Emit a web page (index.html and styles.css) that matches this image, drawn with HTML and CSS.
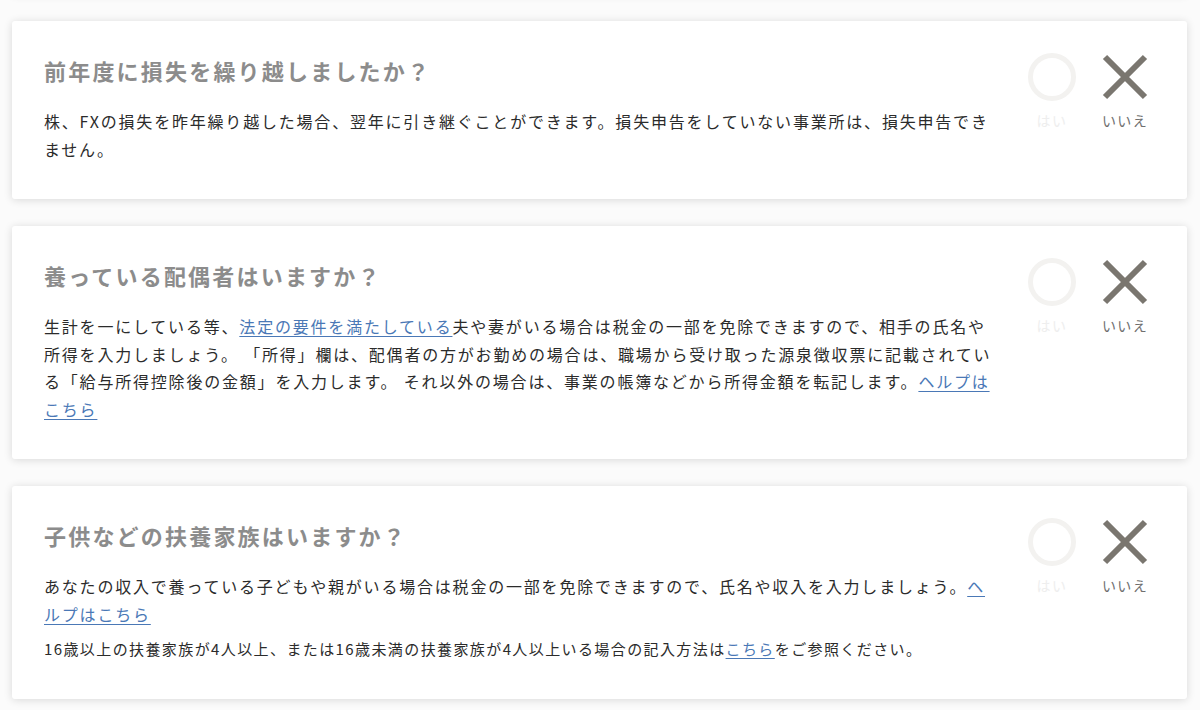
FILE: index.html
```html
<!DOCTYPE html>
<html lang="ja">
<head>
<meta charset="utf-8">
<title>質問</title>
<link rel="stylesheet" href="styles.css">
</head>
<body>
<div class="list">
  <div class="card card-prev"></div>

  <section class="card">
    <div class="content">
      <h2 class="title">前年度に損失を繰り越しましたか？</h2>
      <p class="desc">株、FXの損失を昨年繰り越した場合、翌年に引き継ぐことができます。損失申告をしていない事業所は、損失申告できません。</p>
    </div>
    <div class="choices">
      <div class="choice choice-yes">
        <svg class="icon" viewBox="0 0 48 48" width="48" height="48"><circle cx="24" cy="24" r="21.5" fill="none" stroke="#f3f2f0" stroke-width="5"/></svg>
        <span class="label">はい</span>
      </div>
      <div class="choice choice-no">
        <svg class="icon" viewBox="0 0 48 48" width="48" height="48"><path d="M4 4L44 44M44 4L4 44" fill="none" stroke="#7a766f" stroke-width="6"/></svg>
        <span class="label">いいえ</span>
      </div>
    </div>
  </section>

  <section class="card">
    <div class="content">
      <h2 class="title">養っている配偶者はいますか？</h2>
      <p class="desc">生計を一にしている等、<a href="#" class="link">法定の要件を満たしている</a>夫や妻がいる場合は税金の一部を免除できますので、相手の氏名や所得を入力しましょう。 「所得」欄は、配偶者の方がお勤めの場合は、職場から受け取った源泉徴収票に記載されている「給与所得控除後の金額」を入力します。 それ以外の場合は、事業の帳簿などから所得金額を転記します。<a href="#" class="link">ヘルプはこちら</a></p>
    </div>
    <div class="choices">
      <div class="choice choice-yes">
        <svg class="icon" viewBox="0 0 48 48" width="48" height="48"><circle cx="24" cy="24" r="21.5" fill="none" stroke="#f3f2f0" stroke-width="5"/></svg>
        <span class="label">はい</span>
      </div>
      <div class="choice choice-no">
        <svg class="icon" viewBox="0 0 48 48" width="48" height="48"><path d="M4 4L44 44M44 4L4 44" fill="none" stroke="#7a766f" stroke-width="6"/></svg>
        <span class="label">いいえ</span>
      </div>
    </div>
  </section>

  <section class="card">
    <div class="content">
      <h2 class="title">子供などの扶養家族はいますか？</h2>
      <p class="desc">あなたの収入で養っている子どもや親がいる場合は税金の一部を免除できますので、氏名や収入を入力しましょう。<a href="#" class="link">ヘルプはこちら</a></p>
      <p class="note">16歳以上の扶養家族が4人以上、または16歳未満の扶養家族が4人以上いる場合の記入方法は<a href="#" class="link">こちら</a>をご参照ください。</p>
    </div>
    <div class="choices">
      <div class="choice choice-yes">
        <svg class="icon" viewBox="0 0 48 48" width="48" height="48"><circle cx="24" cy="24" r="21.5" fill="none" stroke="#f3f2f0" stroke-width="5"/></svg>
        <span class="label">はい</span>
      </div>
      <div class="choice choice-no">
        <svg class="icon" viewBox="0 0 48 48" width="48" height="48"><path d="M4 4L44 44M44 4L4 44" fill="none" stroke="#7a766f" stroke-width="6"/></svg>
        <span class="label">いいえ</span>
      </div>
    </div>
  </section>
</div>
</body>
</html>
```

FILE: styles.css
```css
* {
  box-sizing: border-box;
}

html, body {
  margin: 0;
  padding: 0;
  background: #fbfbfb;
}

body {
  font-family: "Noto Sans CJK JP", "Noto Sans", "Liberation Sans", sans-serif;
  color: #2b2b2b;
  overflow: hidden;
  height: 710px;
}

.list {
  display: flex;
  flex-direction: column;
  gap: 27px;
  padding: 21px 13px 0 12px;
}

.card {
  display: flex;
  align-items: flex-start;
  background: #ffffff;
  border-radius: 3px;
  box-shadow: 0 1px 8px rgba(0, 0, 0, 0.14);
  padding: 32px 38px 36px 32px;
}

.card-prev {
  height: 100px;
  margin-top: -127px;
  padding: 0;
}

.content {
  width: 950px;
  margin-right: 34px;
  flex: none;
}

.title {
  margin: 0 0 21px;
  font-size: 22px;
  line-height: 34px;
  font-weight: bold;
  color: #8c8c8c;
  letter-spacing: 0.1em;
}

.desc {
  margin: 0;
  font-size: 16px;
  line-height: 27.5px;
  letter-spacing: 1.8px;
  color: #2b2b2b;
}

.note {
  margin: 9px 0 2px;
  font-size: 15px;
  line-height: 24px;
  letter-spacing: 1.4px;
  color: #2b2b2b;
}

.link {
  color: #4a78b6;
  text-decoration: underline;
  text-underline-offset: 3px;
  text-decoration-thickness: 1px;
}

.choices {
  display: flex;
  gap: 25px;
  flex: none;
}

.choice {
  width: 48px;
  display: flex;
  flex-direction: column;
  align-items: center;
}

.icon {
  display: block;
}

.label {
  margin-top: 9px;
  font-size: 14px;
  line-height: 20px;
  letter-spacing: 0.1em;
  white-space: nowrap;
}

.choice-yes .label {
  color: #eeeeee;
}

.choice-no .label {
  color: #6f6f6f;
}
```
